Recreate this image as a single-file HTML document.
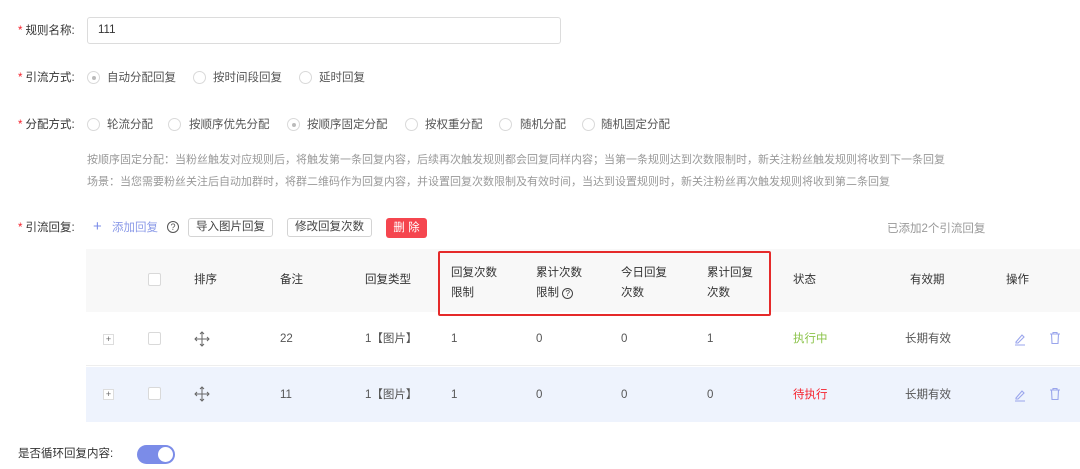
<!DOCTYPE html>
<html><head><meta charset="utf-8"><style>
*{margin:0;padding:0;box-sizing:border-box}
body{width:1080px;height:469px;background:#fff;font-family:"Liberation Sans","Noto Sans CJK SC",sans-serif;font-size:11.5px;color:#555;position:relative;overflow:hidden}
.a{position:absolute;white-space:nowrap;line-height:14px}
.st{color:#f5222d;margin-right:3px}
.r{position:absolute;width:13px;height:13px;border:1px solid #d9d9d9;border-radius:50%;background:#fff}
.r.on::after{content:"";position:absolute;left:3.5px;top:3.5px;width:4px;height:4px;border-radius:50%;background:#bbb}
.cb{position:absolute;width:13px;height:13px;border:1px solid #d9d9d9;border-radius:2px;background:#fff}
.btn{position:absolute;height:19px;border:1px solid #d4d4d4;border-radius:3px;line-height:17px;text-align:center;color:#444;background:#fff}
.gray{color:#999}
.ex{position:absolute;width:11px;height:11px;border:1px solid #ddd;font-size:9px;line-height:9px;text-align:center;color:#666;background:#fff}
</style></head><body>
<div class="a" style="left:18px;top:24px;color:#333"><span class="st">*</span>规则名称:</div>
<div style="position:absolute;left:87px;top:17px;width:474px;height:27px;border:1px solid #dcdcdc;border-radius:3px;padding-left:10px;line-height:25px;color:#333">111</div>

<div class="a" style="left:18px;top:71px;color:#333"><span class="st">*</span>引流方式:</div>
<div class="r on" style="left:87px;top:71px"></div><div class="a" style="left:107px;top:71px">自动分配回复</div>
<div class="r" style="left:193px;top:71px"></div><div class="a" style="left:213px;top:71px">按时间段回复</div>
<div class="r" style="left:299px;top:71px"></div><div class="a" style="left:319px;top:71px">延时回复</div>

<div class="a" style="left:18px;top:118px;color:#333"><span class="st">*</span>分配方式:</div>
<div class="r" style="left:87px;top:118px"></div><div class="a" style="left:107px;top:118px">轮流分配</div>
<div class="r" style="left:168px;top:118px"></div><div class="a" style="left:189px;top:118px">按顺序优先分配</div>
<div class="r on" style="left:287px;top:118px"></div><div class="a" style="left:307px;top:118px">按顺序固定分配</div>
<div class="r" style="left:405px;top:118px"></div><div class="a" style="left:425px;top:118px">按权重分配</div>
<div class="r" style="left:499px;top:118px"></div><div class="a" style="left:520px;top:118px">随机分配</div>
<div class="r" style="left:582px;top:118px"></div><div class="a" style="left:601px;top:118px">随机固定分配</div>

<div class="a gray" style="left:87px;top:153px;font-size:11px">按顺序固定分配：当粉丝触发对应规则后，将触发第一条回复内容，后续再次触发规则都会回复同样内容；当第一条规则达到次数限制时，新关注粉丝触发规则将收到下一条回复</div>
<div class="a gray" style="left:87px;top:175px;font-size:11px">场景：当您需要粉丝关注后自动加群时，将群二维码作为回复内容，并设置回复次数限制及有效时间，当达到设置规则时，新关注粉丝再次触发规则将收到第二条回复</div>

<div class="a" style="left:18px;top:221px;color:#333"><span class="st">*</span>引流回复:</div>
<div class="a" style="left:93px;top:220px;color:#7b8ce8;font-size:15px">+</div>
<div class="a" style="left:112px;top:221px;color:#8c9be8">添加回复</div>
<div class="a" style="left:167px;top:221px;font-size:9px;width:12px;height:12px;border:1px solid #555;border-radius:50%;line-height:10px;text-align:center">?</div>
<div class="btn" style="left:188px;top:218px;width:85px">导入图片回复</div>
<div class="btn" style="left:287px;top:218px;width:85px">修改回复次数</div>
<div style="position:absolute;left:386px;top:218px;width:41px;height:20px;background:#f5464f;border-radius:3px;color:#fff;line-height:20px;text-align:center">删 除</div>
<div class="a gray" style="left:887px;top:222px">已添加2个引流回复</div>

<div style="position:absolute;left:86px;top:249px;width:994px;height:63px;background:#f8f8f8"></div>
<div style="position:absolute;left:86px;top:312px;width:994px;height:54px;background:#fff;border-bottom:1px solid #eee"></div>
<div style="position:absolute;left:86px;top:367px;width:994px;height:55px;background:#eef3fd"></div>
<div style="position:absolute;left:438px;top:251px;width:333px;height:65px;border:2px solid #e52a2a;border-radius:2px"></div>

<div class="cb" style="left:148px;top:273px"></div>
<div class="a" style="left:194px;top:273px;color:#333">排序</div>
<div class="a" style="left:280px;top:273px;color:#333">备注</div>
<div class="a" style="left:365px;top:273px;color:#333">回复类型</div>
<div class="a" style="left:451px;top:263px;color:#333;line-height:20px">回复次数<br>限制</div>
<div class="a" style="left:536px;top:263px;color:#333;line-height:20px">累计次数<br>限制 <span style="display:inline-block;width:11px;height:11px;border:1px solid #444;border-radius:50%;font-size:8px;line-height:9px;text-align:center">?</span></div>
<div class="a" style="left:621px;top:263px;color:#333;line-height:20px">今日回复<br>次数</div>
<div class="a" style="left:707px;top:263px;color:#333;line-height:20px">累计回复<br>次数</div>
<div class="a" style="left:793px;top:273px;color:#333">状态</div>
<div class="a" style="left:910px;top:273px;color:#333">有效期</div>
<div class="a" style="left:1006px;top:273px;color:#333">操作</div>

<div class="ex" style="left:103px;top:334px">+</div>
<div class="cb" style="left:148px;top:332px"></div>
<svg style="position:absolute;left:194px;top:331px" width="16" height="16" viewBox="0 0 16 16" fill="none" stroke="#666" stroke-width="1"><path d="M8 1 V15 M1 8 H15 M6 3 L8 1 L10 3 M6 13 L8 15 L10 13 M3 6 L1 8 L3 10 M13 6 L15 8 L13 10"/></svg>
<div class="a" style="left:280px;top:332px">22</div>
<div class="a" style="left:365px;top:332px">1【图片】</div>
<div class="a" style="left:451px;top:332px">1</div>
<div class="a" style="left:536px;top:332px">0</div>
<div class="a" style="left:621px;top:332px">0</div>
<div class="a" style="left:707px;top:332px">1</div>
<div class="a" style="left:793px;top:332px;color:#8bc34a">执行中</div>
<div class="a" style="left:905px;top:332px">长期有效</div>

<div class="ex" style="left:103px;top:389px">+</div>
<div class="cb" style="left:148px;top:387px"></div>
<svg style="position:absolute;left:194px;top:386px" width="16" height="16" viewBox="0 0 16 16" fill="none" stroke="#666" stroke-width="1"><path d="M8 1 V15 M1 8 H15 M6 3 L8 1 L10 3 M6 13 L8 15 L10 13 M3 6 L1 8 L3 10 M13 6 L15 8 L13 10"/></svg>
<div class="a" style="left:280px;top:388px">11</div>
<div class="a" style="left:365px;top:388px">1【图片】</div>
<div class="a" style="left:451px;top:388px">1</div>
<div class="a" style="left:536px;top:388px">0</div>
<div class="a" style="left:621px;top:388px">0</div>
<div class="a" style="left:707px;top:388px">0</div>
<div class="a" style="left:793px;top:388px;color:#f5222d">待执行</div>
<div class="a" style="left:905px;top:388px">长期有效</div>

<svg style="position:absolute;left:1013px;top:332px" width="14" height="14" viewBox="0 0 14 14" fill="none" stroke="#9aa5ec" stroke-width="1.1"><path d="M3 10 L9 3 L11 5 L5 11 L3 11 Z M2 13 H12"/></svg>
<svg style="position:absolute;left:1048px;top:331px" width="14" height="14" viewBox="0 0 14 14" fill="none" stroke="#9aa5ec" stroke-width="1.1"><path d="M2 3 H12 M5 3 V1.5 H9 V3 M3.5 3 L4 12.5 H10 L10.5 3"/></svg>
<svg style="position:absolute;left:1013px;top:388px" width="14" height="14" viewBox="0 0 14 14" fill="none" stroke="#9aa5ec" stroke-width="1.1"><path d="M3 10 L9 3 L11 5 L5 11 L3 11 Z M2 13 H12"/></svg>
<svg style="position:absolute;left:1048px;top:387px" width="14" height="14" viewBox="0 0 14 14" fill="none" stroke="#9aa5ec" stroke-width="1.1"><path d="M2 3 H12 M5 3 V1.5 H9 V3 M3.5 3 L4 12.5 H10 L10.5 3"/></svg>

<div class="a" style="left:18px;top:447px;color:#333">是否循环回复内容:</div>
<div style="position:absolute;left:137px;top:445px;width:38px;height:19px;border-radius:10px;background:#7b8ce8"><div style="position:absolute;right:2px;top:2px;width:15px;height:15px;border-radius:50%;background:#fff"></div></div>
</body></html>
